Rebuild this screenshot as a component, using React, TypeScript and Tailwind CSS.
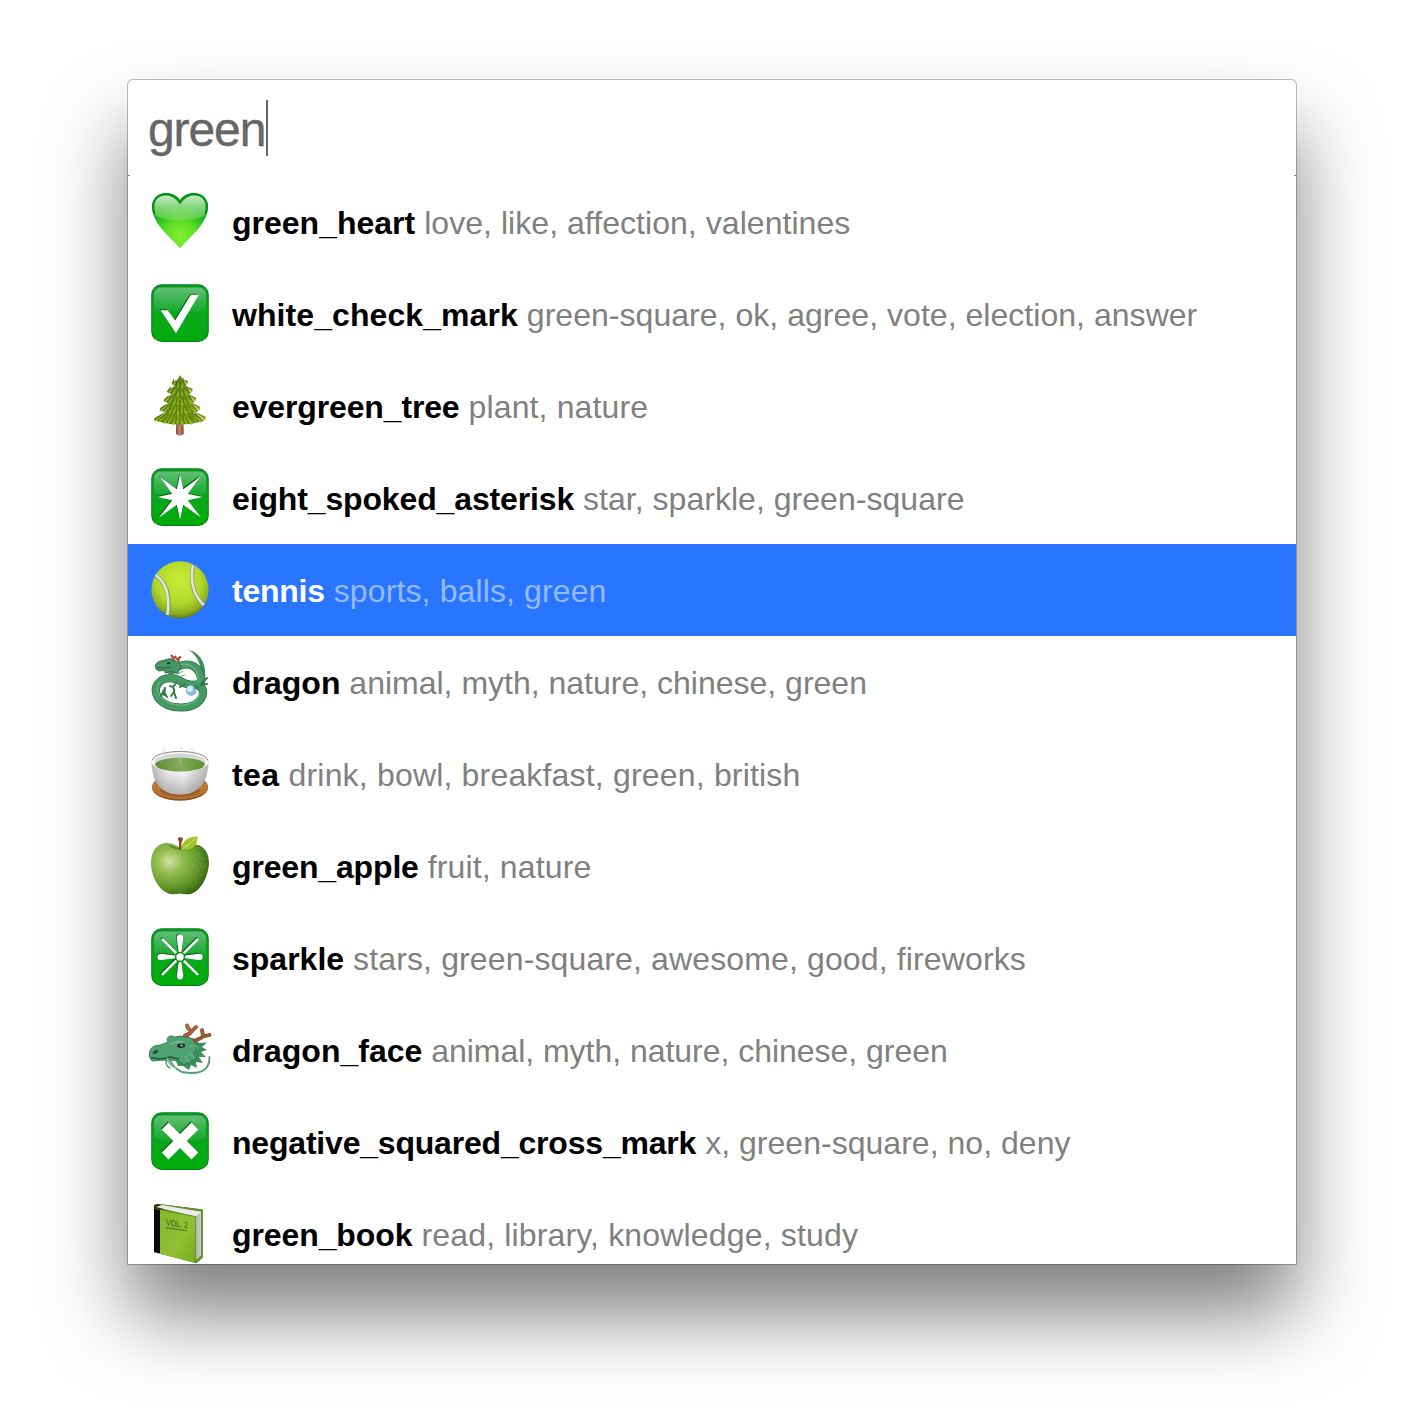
import type { ReactNode } from "react";

function Icon({ dy = 0, children }: { dy?: number; children: ReactNode }) {
  return (
    <svg className="h-20 w-20 shrink-0" viewBox="0 0 80 80" aria-hidden="true">
      <g transform={`translate(0 ${dy})`}>{children}</g>
    </svg>
  );
}

function Gradients() {
  return (
    <svg className="absolute h-0 w-0" aria-hidden="true">
      <defs>
        <linearGradient id="tile" x2="0" y2="1">
          <stop offset="0" stopColor="#079b27" />
          <stop offset=".45" stopColor="#0ba620" />
          <stop offset="1" stopColor="#00ac08" />
        </linearGradient>
        <linearGradient id="gloss" x2="0" y2="1">
          <stop offset="0" stopColor="#fff" stopOpacity=".36" />
          <stop offset="1" stopColor="#fff" stopOpacity=".04" />
        </linearGradient>
        <radialGradient id="heart" cx=".5" cy=".78" r=".6">
          <stop offset="0" stopColor="#83ee2e" />
          <stop offset=".45" stopColor="#5fdf26" />
          <stop offset="1" stopColor="#0cab1d" />
        </radialGradient>
        <linearGradient id="heartGloss" x2="0" y2="1">
          <stop offset="0" stopColor="#d5ecd2" stopOpacity=".95" />
          <stop offset="1" stopColor="#8fe070" stopOpacity=".45" />
        </linearGradient>
        <radialGradient id="ball" cx=".48" cy=".35" r=".65">
          <stop offset="0" stopColor="#c9ec35" />
          <stop offset=".6" stopColor="#b2d92b" />
          <stop offset=".88" stopColor="#89ac20" />
          <stop offset="1" stopColor="#5f7d19" />
        </radialGradient>
        <radialGradient id="apple" cx=".32" cy=".36" r=".75">
          <stop offset="0" stopColor="#d3e3a6" />
          <stop offset=".3" stopColor="#94bd51" />
          <stop offset=".65" stopColor="#659a2a" />
          <stop offset="1" stopColor="#315f0b" />
        </radialGradient>
        <linearGradient id="bowl">
          <stop offset="0" stopColor="#b4b4b4" />
          <stop offset=".25" stopColor="#e6e6e6" />
          <stop offset=".55" stopColor="#f8f8f8" />
          <stop offset="1" stopColor="#b4b4b4" />
        </linearGradient>
        <linearGradient id="bowlShade" x2="0" y2="1">
          <stop offset=".3" stopColor="#555" stopOpacity="0" />
          <stop offset="1" stopColor="#555" stopOpacity=".4" />
        </linearGradient>
        <linearGradient id="teaLiquid">
          <stop offset="0" stopColor="#5f8c3b" />
          <stop offset=".5" stopColor="#86ab5f" />
          <stop offset="1" stopColor="#5d9331" />
        </linearGradient>
        <linearGradient id="cover" x2="1" y2="1">
          <stop offset="0" stopColor="#86b62d" />
          <stop offset=".6" stopColor="#8fc034" />
          <stop offset="1" stopColor="#73aa1b" />
        </linearGradient>
        <linearGradient id="needles" x2="0" y2="1">
          <stop offset="0" stopColor="#45630a" />
          <stop offset=".5" stopColor="#7a9d17" />
          <stop offset="1" stopColor="#a0c024" />
        </linearGradient>
        <linearGradient id="trunk">
          <stop offset="0" stopColor="#7d4b33" />
          <stop offset=".5" stopColor="#c58d6e" />
          <stop offset="1" stopColor="#744128" />
        </linearGradient>
        <linearGradient id="antler" x2="1" y2="1">
          <stop offset="0" stopColor="#b86b45" />
          <stop offset="1" stopColor="#964f30" />
        </linearGradient>
      </defs>
    </svg>
  );
}

function Tile({ children }: { children: ReactNode }) {
  return (
    <Icon>
      <rect x="11.2" y="10.3" width="57.6" height="57.6" rx="10.500" fill="#067d18" />
      <rect x="12.2" y="11.3" width="55.6" height="55.8" rx="9.6" fill="url(#tile)" />
      <path d="M14 34V21q0-7.500 7.500-7.500h37q7.500 0 7.500 7.500v13q-2 4-12 4H26q-10 0-12-4z" fill="url(#gloss)" />
      <g transform="translate(-.8 -.9)" fill="#055f12" stroke="#055f12">
        {children}
      </g>
      <g fill="#fff" stroke="#fff">
        {children}
      </g>
    </Icon>
  );
}

function Heart() {
  const outline = "M40 66.5C34 58 12 43 12 24.5C12 11 31 5.500 40 18C49 5.500 68 11 68 24.500C68 43 46 58 40 66.500Z";
  return (
    <Icon>
      <path d={outline} fill="url(#heart)" />
      <path
        d="M14.500 32C10.500 21 16 12 26 12.100Q35 12.500 40 20Q45 12.500 54 12.100C64 12 69.500 21 65.500 32"
        fill="none"
        stroke="#079219"
        strokeWidth="2.200"
      />
      <path
        d="M14.500 26C13.500 17 20 13.500 26 13.500Q34 13.500 40 22.500Q46 13.500 54 13.500C61 13.500 66.500 18 65.500 26L64.500 34Q40 43 15.500 34Z"
        fill="url(#heartGloss)"
      />
    </Icon>
  );
}

const treeTiers = [
  { top: 12, bottom: 26, half: 6, count: 4 },
  { top: 18, bottom: 34, half: 10.5, count: 6 },
  { top: 25, bottom: 43, half: 14, count: 8 },
  { top: 33, bottom: 52, half: 18, count: 10 },
  { top: 42, bottom: 62, half: 23.5, count: 12 },
];

function Tree() {
  return (
    <Icon dy={-2}>
      <path d="M36.200 58h7.200l.3 12q-4 3.500-7.800 0z" fill="url(#trunk)" />
      {[...treeTiers].reverse().map((tier) => {
        const needles = Array.from({ length: tier.count }, (_, i) => {
          const t = (i / (tier.count - 1)) * 2 - 1;
          const x = 40 + t * tier.half;
          const tip = tier.bottom - Math.abs(t) ** 2 * 4 - (i % 2) * 1.2;
          const wide = tier.half / tier.count + 0.4;
          const startX = 40 + t * tier.half * 0.45;
          return (
            <g key={i}>
              <path
                d={`M${startX} ${tier.top + 4}L${x - wide} ${tip - 4}L${x + t * 1.5} ${tip}L${x + wide} ${tip - 4}Z`}
                fill="url(#needles)"
              />
              <path
                d={`M${x * 0.5 + startX * 0.5 - wide * 0.8} ${tip - 7}L${x - wide} ${tip - 2}`}
                stroke="#425f0a"
                strokeWidth=".9"
              />
            </g>
          );
        });
        const left = 40 - tier.half;
        const right = 40 + tier.half;
        return (
          <g key={tier.top}>
            <path
              d={`M40 ${tier.top - 1}Q${right - 4} ${tier.bottom - 11} ${right + 0.5} ${tier.bottom - 5}Q40 ${tier.bottom + 2} ${left - 0.5} ${tier.bottom - 5}Q${left + 4} ${tier.bottom - 11} 40 ${tier.top - 1}Z`}
              fill="#64860f"
            />
            {needles}
          </g>
        );
      })}
    </Icon>
  );
}

const spokes = [0, 45, 90, 135, 180, 225, 270, 315];

function EightSpoked() {
  return (
    <Tile>
      <path
        stroke="none"
        d="M40 16.500L43.200 31.200L60.500 18.500L47.800 35.700L62.300 39L47.800 42.300L61 59.500L43.200 46.800L40 61.500L36.800 46.800L19 59.500L32.200 42.300L17.700 39L32.200 35.700L19.500 18.500L36.800 31.200Z"
      />
    </Tile>
  );
}

function Sparkle() {
  return (
    <Tile>
      <circle cx="40" cy="38.900" r="3.700" stroke="none" />
      {spokes.map((angle) =>
        angle % 90 === 0 ? (
          <path
            key={angle}
            stroke="none"
            transform={`rotate(${angle} 40 38.900)`}
            d="M38.600 33.500L36.800 20Q36.800 16.300 40 16.300Q43.200 16.300 43.200 20L41.400 33.500Q40 34.800 38.600 33.500Z"
          />
        ) : (
          <path
            key={angle}
            transform={`rotate(${angle} 40 38.900)`}
            d="M40 32.500V14.500"
            strokeWidth="2.600"
            strokeLinecap="round"
          />
        ),
      )}
    </Tile>
  );
}

function Check() {
  return (
    <Tile>
      <path stroke="none" d="M20.500 36.200H27.600L35.200 46.500L50.800 20.800H58.800L36 59.200Z" />
    </Tile>
  );
}

function Cross() {
  return (
    <Tile>
      <path
        stroke="none"
        d="M28.500 20.500L40 32L51.500 20.500L58.300 27.500L46.800 39L58.300 50.500L51.500 57.400L40 46L28.500 57.400L21.700 50.500L33.200 39L21.700 27.500Z"
      />
    </Tile>
  );
}

function Tennis() {
  return (
    <Icon>
      <circle cx="40" cy="39.800" r="28.600" fill="url(#ball)" />
      <g fill="none" strokeLinecap="butt">
        <path d="M15.700 25.500Q32 36 28 65M53.200 15.200Q48.500 41 63.800 55.500" stroke="#8c9b6a" strokeWidth="4" />
        <path d="M15.500 25Q31.500 36 27.500 65M52.900 15.200Q48.500 40.500 63.800 55" stroke="#e3e5df" strokeWidth="2.500" />
      </g>
    </Icon>
  );
}

const dragonBody =
  "M32 30Q43 22 52 25.500Q62 30 61 43Q50 47 42 42Q32 35.500 22 40Q12 47 18 58Q26 68 42 67.500Q58 67 62.500 56Q65 48 57 45";

function Dragon() {
  return (
    <Icon dy={-2}>
      <path d="M48.500 10C58 12 66.500 21 65.200 37L60 38C62.500 25 57 15 48.500 10Z" fill="#43905c" />
      <g fill="none" strokeLinecap="round" strokeLinejoin="round">
        <path d={dragonBody} stroke="#2c6b46" strokeWidth="8" />
        <path d={dragonBody} stroke="#459b64" strokeWidth="6.600" />
        <path
          d="M38 25.500Q47 22 54 28Q59 35 58 42M20 42Q14 49 21 57Q30 66 44 65Q57 63 60 54"
          stroke="#6db27d"
          strokeWidth="1.300"
        />
        <path
          d="M25 48L24 55M24 50L21 56M24 52L27 57M30 46Q35 47 34 52L31 56M34 52L36 58M36 43L33 47M45 44L40 47M61 44L67 38M61 45L67 44"
          stroke="#327a4c"
          strokeWidth="2"
        />
        <path d="M25 32Q36 37 43 31M28 33Q36 39 45 35" stroke="#559a69" strokeWidth=".9" />
      </g>
      <path
        d="M15.500 25Q17 21 23 20.500L30 18.500Q37 20 41 26L38 33L31 31.500L25 33L25 30.500L19 31Q14.500 29.500 15.500 25Z"
        fill="#459662"
        stroke="#286344"
        strokeWidth=".8"
      />
      <path d="M17 28L25 28L31 27" stroke="#235339" strokeWidth=".8" fill="none" />
      <path d="M27 23.500L30 23" stroke="#13291e" strokeWidth="1.500" />
      <path d="M34 21L33 17.500L31 15M34 18L36 16M38.500 22L38.500 18.500L41 16.500M38 20L36 18" stroke="#a64e34" strokeWidth="2.200" fill="none" />
      <circle cx="51.200" cy="50.500" r="5.400" fill="#8eb9df" />
      <circle cx="49.800" cy="49" r="3" fill="#d5e8f5" />
      <path d="M54 45L56 49M57 45L59 50" stroke="#347c4e" strokeWidth="1.600" />
    </Icon>
  );
}

const bowlShape = "M11.500 27C12 46 20 59.500 40 59.500S68 46 68.500 27Z";

function Tea() {
  return (
    <Icon dy={1}>
      <ellipse cx="40" cy="53" rx="28" ry="12.700" fill="#8d5426" />
      <ellipse cx="40" cy="51.500" rx="28" ry="12.500" fill="#b97432" />
      <ellipse cx="40" cy="55" rx="20" ry="7" fill="#7f471e" opacity=".5" />
      <path d={bowlShape} fill="url(#bowl)" />
      <path d={bowlShape} fill="url(#bowlShade)" />
      <ellipse cx="40" cy="26.700" rx="28.500" ry="10.400" fill="#fafafa" />
      <path d="M12 25.500C15 13.500 65 13.500 68 25.500" fill="none" stroke="#858585" strokeWidth="1" />
      <ellipse cx="40" cy="27.500" rx="25.800" ry="9" fill="#d6d6d6" />
      <ellipse cx="40" cy="29.600" rx="24.700" ry="7" fill="url(#teaLiquid)" />
      <g fill="none" stroke="#ccc" strokeWidth="2.500" opacity=".28" strokeLinecap="round">
        <path d="M27 21Q21 17 25 13M41 27Q38 22 42 17Q43 14 41 12M52 20Q56 17 52 14" />
      </g>
    </Icon>
  );
}

const speckles = [
  [54, 26], [59, 29], [63, 34], [56, 34], [60, 38], [64, 42], [53, 41],
  [58, 45], [61, 50], [50, 48], [55, 53], [48, 58], [52, 61], [56, 58],
];

function Apple() {
  return (
    <Icon dy={-1}>
      <path
        d="M40 22.500C46 19 51 18.500 56 19.500C65 21 69 29 69 38C68.500 51 61 67 49.500 69.300Q44 69.500 40 68.500Q36 69.500 31.500 69.300C19 67 11 51 11 38C11 25 18 18 27 18Q34 18.500 40 22.500Z"
        fill="url(#apple)"
      />
      <path d="M30 20.500Q40 27 52 22" stroke="#41701b" strokeWidth="2" fill="none" opacity=".6" />
      <g fill="#b6d274" opacity=".45">
        {speckles.map(([x, y]) => (
          <circle key={`${x}-${y}`} cx={x} cy={y} r=".7" />
        ))}
      </g>
      <path d="M39 24.500V16.500Q36.500 13 39.500 12.300Q44 12 42.500 15.500L41.500 18V24.500Z" fill="#8b4a2d" />
      <path d="M41 24.500Q43 11.500 57.800 11.500Q56.500 27 41 24.500Z" fill="#9fc62a" />
      <path d="M43 23.300Q50 20 55.500 13" stroke="#dce88a" strokeWidth=".9" fill="none" />
    </Icon>
  );
}

function DragonFace() {
  return (
    <Icon>
      <g fill="none" stroke="#51a171" strokeLinecap="round">
        <path d="M29 47Q32 58 42 62Q70 67 69.500 47" strokeWidth="1.900" />
        <path d="M27 48Q24 55 30 58" strokeWidth="1.500" />
      </g>
      <path
        d="M29 34Q36 24 48 27L56 29L59 33L67 32.500L62 37L67 40L61 42L66 47L59 47L63 53L56 52L57 58L51 55L49 60L43 56L38 56L35 49L28 48Z"
        fill="#3f8f5d"
      />
      <path
        d="M9.500 42Q11 35 20 35L28 32L27 29Q29 24 35 27Q40 25 47 27Q56 29 57 37L54 43L57 48L51 51L44 55L38 51L31 50L26 50L12 51Q8 47 9.500 42Z"
        fill="#4ea270"
        stroke="#2d7047"
        strokeWidth=".8"
      />
      <path d="M11 48Q24 50 30 47L39 49" stroke="#21593a" strokeWidth="1.500" fill="none" />
      <ellipse cx="15.500" cy="42" rx="3" ry="1.600" transform="rotate(-30 15.500 42)" fill="#23513a" />
      <path d="M27 48Q29 56 36 58M30 35Q35 31 43 32" stroke="#7dbd92" strokeWidth="1.400" fill="none" />
      <ellipse cx="41.200" cy="35.700" rx="4" ry="2.200" transform="rotate(-5 41.200 35.700)" fill="#152a23" />
      <circle cx="41.500" cy="35.500" r="1.100" fill="#cbd9d7" />
      <path d="M50 36Q57 34 58 39M48 42Q53 44 54 49M45 46Q47 51 50 52" stroke="#6bb083" strokeWidth="1.300" fill="none" />
      <g fill="none" strokeLinecap="round" strokeLinejoin="round">
        <path d="M45 25.500Q49 25 52 21L56 17M51 21L48 18L47 15.500M55 30.500Q60 29 63 26.500L69.500 25M63 26L62 20" stroke="#75402b" strokeWidth="3.800" />
        <path d="M45 25.500Q49 25 52 21L56 17M51 21L48 18L47 15.500M55 30.500Q60 29 63 26.500L69.500 25M63 26L62 20" stroke="url(#antler)" strokeWidth="2.600" />
      </g>
    </Icon>
  );
}

function Book() {
  return (
    <Icon>
      <path d="M14 12Q14 10 18 10L62.500 15.500V64L56 69L14 58Z" fill="#213413" />
      <path d="M20 10L62.700 15.500V63.500L57 68.500Z" fill="#65942a" />
      <path d="M20 12L61 17.500V61.500L55 67L52 22Z" fill="#d0d0cf" />
      <path d="M16 13L22 11L61 18L55 22.500Z" fill="#ececec" />
      <path d="M57 21.500V65M59 20V63" stroke="#a5a5a5" strokeWidth=".7" />
      <path d="M14 14L20.500 15.500V59.500L14 58Z" fill="#050b05" />
      <path d="M20 15.500L55.700 22.500V69L20 60Z" fill="url(#cover)" />
      <path d="M14.300 14.500L55.700 22.500V69" fill="none" stroke="#527c19" strokeWidth=".8" />
      <text
        transform="translate(26 31.300) skewY(8) scale(.8 1)"
        fill="#365b13"
        fontFamily="Liberation Sans, sans-serif"
        fontSize="8.800"
      >
        VOL. 2
      </text>
      <path d="M26.500 33.800L47 36.800" stroke="#426b18" strokeWidth="1.300" strokeDasharray="1.800 .5" />
    </Icon>
  );
}

type Result = {
  name: string;
  tags: string;
  icon: ReactNode;
  nameClass?: string;
  tagsClass?: string;
  selected?: boolean;
};

const results: Result[] = [
  { name: "green_heart", tags: "love, like, affection, valentines", icon: <Heart />, tagsClass: "tracking-[0.05px]" },
  {
    name: "white_check_mark",
    tags: "green-square, ok, agree, vote, election, answer",
    icon: <Check />,
    nameClass: "tracking-[0.08px]",
    tagsClass: "tracking-[0.035px]",
  },
  {
    name: "evergreen_tree",
    tags: "plant, nature",
    icon: <Tree />,
    nameClass: "tracking-[-0.14px]",
    tagsClass: "tracking-[0.13px]",
  },
  {
    name: "eight_spoked_asterisk",
    tags: "star, sparkle, green-square",
    icon: <EightSpoked />,
    nameClass: "tracking-[-0.14px]",
    tagsClass: "tracking-[0.03px]",
  },
  {
    name: "tennis",
    tags: "sports, balls, green",
    icon: <Tennis />,
    nameClass: "tracking-[-0.25px]",
    tagsClass: "tracking-[0.12px]",
    selected: true,
  },
  { name: "dragon", tags: "animal, myth, nature, chinese, green", icon: <Dragon /> },
  {
    name: "tea",
    tags: "drink, bowl, breakfast, green, british",
    icon: <Tea />,
    nameClass: "tracking-[0.4px]",
    tagsClass: "tracking-[0.18px]",
  },
  {
    name: "green_apple",
    tags: "fruit, nature",
    icon: <Apple />,
    nameClass: "tracking-[-0.16px]",
    tagsClass: "tracking-[0.13px]",
  },
  {
    name: "sparkle",
    tags: "stars, green-square, awesome, good, fireworks",
    icon: <Sparkle />,
    tagsClass: "tracking-[0.13px]",
  },
  { name: "dragon_face", tags: "animal, myth, nature, chinese, green", icon: <DragonFace />, tagsClass: "tracking-[-0.03px]" },
  {
    name: "negative_squared_cross_mark",
    tags: "x, green-square, no, deny",
    icon: <Cross />,
    nameClass: "tracking-[-0.2px]",
    tagsClass: "tracking-[0.03px]",
  },
  {
    name: "green_book",
    tags: "read, library, knowledge, study",
    icon: <Book />,
    nameClass: "tracking-[-0.1px]",
    tagsClass: "tracking-[0.16px]",
  },
];

function ResultRow({ result }: { result: Result }) {
  const { name, tags, icon, selected, nameClass = "", tagsClass = "" } = result;
  return (
    <li
      className={`flex h-[92px] shrink-0 items-center gap-3 pl-3 text-[32px] leading-10 whitespace-pre ${
        selected ? "bg-[#2975ff] text-white" : "text-black"
      }`}
    >
      {icon}
      <p className="pt-0.5">
        <strong className={`font-bold ${nameClass}`}>{name}</strong>
        <span className={`${selected ? "text-[#94baff]" : "text-[#808080]"} ${tagsClass}`}> {tags}</span>
      </p>
    </li>
  );
}

export default function App() {
  return (
    <div className="flex h-[1424px] w-[1424px] items-start justify-center overflow-hidden bg-white pt-20 font-['Liberation_Sans',Arial,sans-serif]">
      <Gradients />
      <main className="relative h-[1184px] w-[1168px] rounded-t-[5px] bg-white shadow-[0_0_0_1px_rgba(0,0,0,0.25),0_50px_80px_rgba(0,0,0,0.5)]">
        <div className="flex h-24 items-center pl-5">
          <span className="w-[118px] pt-1 text-[48px] leading-[56px] tracking-[-1.1px] text-[#666] [-webkit-text-stroke:0.4px_#666]">
            green
          </span>
          <span className="h-14 w-0.5 bg-[#666]" />
        </div>
        <span className="absolute top-[95px] left-0 h-px w-0.5 bg-[#888]" />
        <span className="absolute top-[95px] right-0 h-px w-0.5 bg-[#888]" />
        <ul className="flex h-[1088px] flex-col overflow-hidden">
          {results.map((result) => (
            <ResultRow key={result.name} result={result} />
          ))}
        </ul>
      </main>
    </div>
  );
}
